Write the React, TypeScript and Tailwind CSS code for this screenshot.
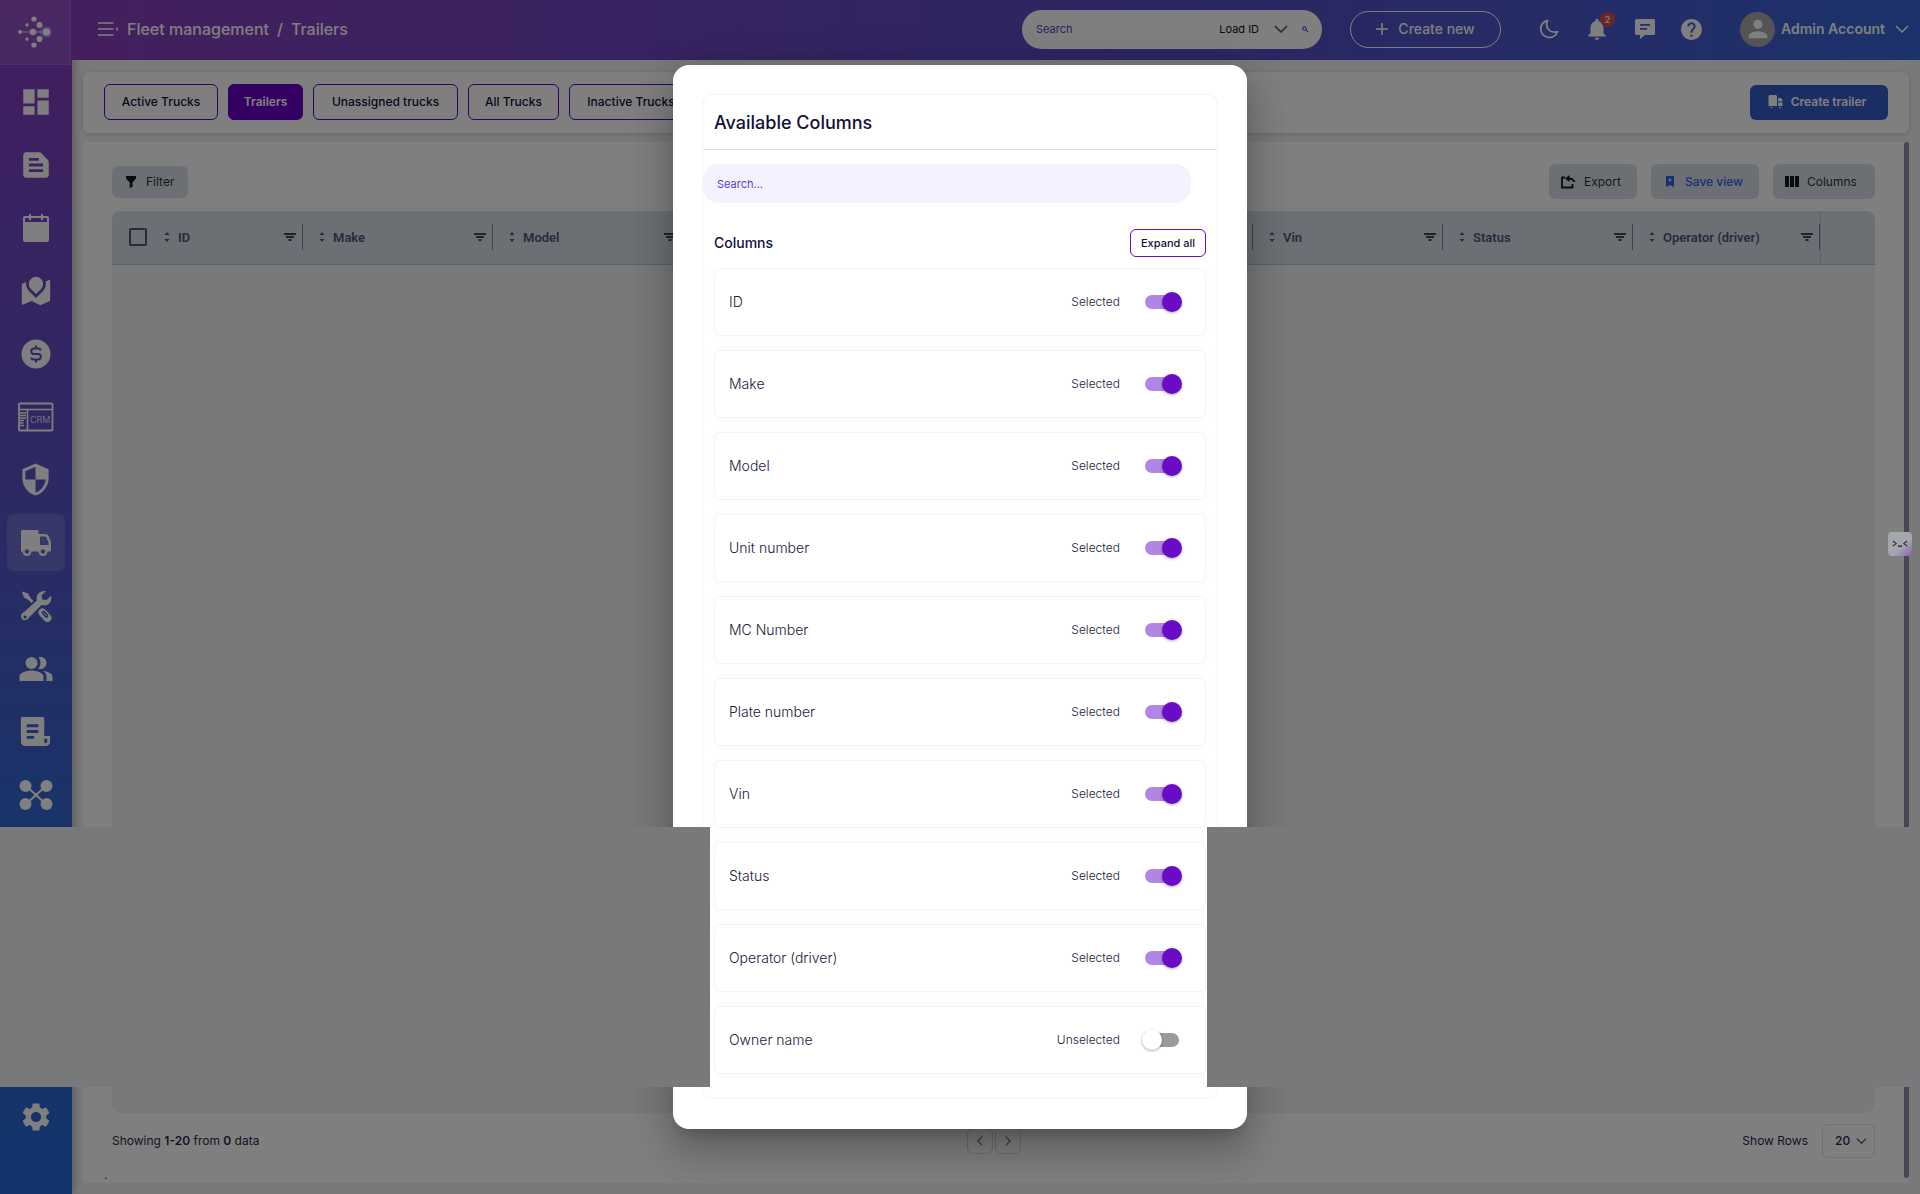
import React, { useState } from "react";
import {
  MdDashboard,
  MdTextSnippet,
  MdPeopleAlt,
  MdSettings,
  MdSecurity,
  MdPerson,
  MdHelp,
  MdNotifications,
} from "react-icons/md";
import { RiFileList3Fill, RiRoadMapFill } from "react-icons/ri";

type IconProps = { className?: string };

const LogoIcon = ({ className }: IconProps) => (
  <svg viewBox="0 0 36 32" className={className} fill="currentColor" aria-hidden="true">
    <circle cx="29" cy="16" r="6" opacity="0.25" />
    <path d="M3 16h26" stroke="currentColor" strokeWidth="1.2" opacity="0.7" />
    <circle cx="17" cy="3" r="2.6" />
    <circle cx="10" cy="9" r="1.7" />
    <circle cx="22.5" cy="9" r="3" />
    <circle cx="3" cy="16" r="1.9" />
    <circle cx="16" cy="16" r="3.2" />
    <circle cx="29.5" cy="16" r="3.8" />
    <circle cx="10" cy="23" r="1.7" />
    <circle cx="22.5" cy="23" r="3" />
    <circle cx="17" cy="29" r="2.6" />
  </svg>
);

const CalendarIcon = ({ className }: IconProps) => (
  <svg viewBox="0 0 28 30" className={className} fill="currentColor" aria-hidden="true">
    <path fillRule="evenodd" d="M7 1h2v2h10V1h2v2h4a2 2 0 0 1 2 2v22a2 2 0 0 1-2 2H3a2 2 0 0 1-2-2V5a2 2 0 0 1 2-2h4V1zM3 5v4h22V5h-4v2h-2V5H9v2H7V5H3z" />
  </svg>
);

const DollarIcon = ({ className }: IconProps) => (
  <svg viewBox="0 0 30 30" className={className} aria-hidden="true">
    <circle cx="15" cy="15" r="14.5" fill="currentColor" />
    <path d="M15 6.500v3M15 20.500v3M19.500 11.500a2 2 0 0 0-2-2h-4.500a2.700 2.700 0 0 0 0 5.500h4a2.700 2.700 0 0 1 0 5.500h-4.500a2 2 0 0 1-2-2" fill="none" stroke="#5d4cc0" strokeWidth="2" />
  </svg>
);

const CrmIcon = ({ className }: IconProps) => (
  <svg viewBox="0 0 36 30" className={className} fill="none" stroke="currentColor" aria-hidden="true">
    <rect x="1" y="1.500" width="33.500" height="27" rx="1" strokeWidth="1.800" />
    <path d="M1 7.500h33.500M9.500 7.500v21" strokeWidth="1.600" />
    <path d="M2 11h6M2 13.500h6M2 16h6M2 18.500h4M2 21h3.500M2 23.500h4" strokeWidth="1.400" />
    <text x="12" y="21" fontSize="9" fontFamily="Inter, sans-serif" fontWeight="300" fill="currentColor" stroke="none">CRM</text>
  </svg>
);

const TruckIcon = ({ className }: IconProps) => (
  <svg viewBox="0 0 32 27" className={className} aria-hidden="true">
    <path fill="currentColor" fillRule="evenodd" d="M2 1h15a1.500 1.500 0 0 1 1.500 1.500V5H25c2 0 3 1 4 3l2 5v8a1.500 1.500 0 0 1-1.500 1.500H1V2a1 1 0 0 1 1-1zm18 6.500v8.500h8.500v-3l-2-4c-.5-1-1-1.500-2-1.500H20z" />
    <circle cx="7" cy="22.500" r="4.500" fill="currentColor" />
    <circle cx="23" cy="22.500" r="4.500" fill="currentColor" />
    <circle cx="7" cy="22.500" r="2.200" fill="#686ab0" />
    <circle cx="23" cy="22.500" r="2.200" fill="#686ab0" />
  </svg>
);

const ToolsIcon = ({ className }: IconProps) => (
  <svg viewBox="0 0 32 32" className={className} aria-hidden="true">
    <path fill="currentColor" d="M2.500 1.500L8 3.500l2.500 4.500 3 3-2 2-3-3L4 7.500l-2-5z" />
    <path fill="currentColor" d="M26 1l-4.500 4.500.7 4 4.300.6L31 5.700c1 4-.5 7.500-3.500 9-2 1-4 1-6 .3L9 27.500c-1.800 4-8 3.600-8-1 0-2.500 1.500-3.700 3-4.500L17 10.500C15.500 4.500 19.500.5 26 1z" />
    <circle cx="5" cy="27" r="1.500" fill="#4455b8" />
    <path d="M22.500 22.500l5 5.500" stroke="currentColor" strokeWidth="8" strokeLinecap="round" />
    <path d="M23.500 22.500l3 3.500" stroke="#4455b8" strokeWidth="3.600" strokeLinecap="round" />
    <path d="M23.500 22.500l3 3.500" stroke="currentColor" strokeWidth="1" strokeLinecap="round" />
  </svg>
);

const NetworkIcon = ({ className }: IconProps) => (
  <svg viewBox="0 0 34 32" className={className} fill="currentColor" aria-hidden="true">
    <path d="M6 6l22 20M28 6L6 26" stroke="currentColor" strokeWidth="2" />
    <circle cx="6.500" cy="7" r="6" />
    <circle cx="27.500" cy="7" r="6" />
    <circle cx="6.500" cy="25" r="6" />
    <circle cx="27.500" cy="25" r="6" />
    <circle cx="17" cy="16" r="2" />
  </svg>
);

const MoonIcon = ({ className }: IconProps) => (
  <svg viewBox="0 0 20 20" className={className} fill="none" stroke="currentColor" strokeWidth="1.800" strokeLinejoin="round" aria-hidden="true">
    <path d="M8.500 1.500A8.600 8.600 0 1 0 18.500 12.500C11 15 5.500 9 8.500 1.500z" />
  </svg>
);

const ChatIcon = ({ className }: IconProps) => (
  <svg viewBox="0 0 20 20" className={className} fill="currentColor" aria-hidden="true">
    <path fillRule="evenodd" d="M1.500 0h17A1.500 1.500 0 0 1 20 1.500v13a1.500 1.500 0 0 1-1.500 1.500H10l-5 4v-4H1.500A1.500 1.500 0 0 1 0 14.500v-13A1.500 1.500 0 0 1 1.500 0zM5 5v1.700h10V5H5zm0 4v1.700h7V9H5z" />
  </svg>
);

const Chevron = ({ className }: IconProps) => (
  <svg viewBox="0 0 14 8" className={className} fill="none" stroke="currentColor" strokeWidth="1.600" aria-hidden="true">
    <path d="M1 1l6 6 6-6" />
  </svg>
);

const FunnelIcon = ({ className }: IconProps) => (
  <svg viewBox="0 0 10 12" className={className} fill="currentColor" aria-hidden="true">
    <path d="M0 0h10v2.500L6.500 6.500V11L3.700 12V6.500L0 2.500z" />
  </svg>
);

const FilterLines = () => (
  <svg viewBox="0 0 12 8" className="h-2 w-3" fill="none" stroke="#161616" aria-hidden="true">
    <path d="M0 1h12M2 4h8M4.500 7h3" strokeWidth="1.600" />
  </svg>
);

const SortIcon = () => (
  <svg viewBox="0 0 6 10" className="h-2.5 w-1.5 shrink-0" fill="currentColor" aria-hidden="true">
    <path d="M3 0l2.500 3h-5zM3 10L.5 7h5z" />
  </svg>
);

const ExportIcon = () => (
  <svg viewBox="0 0 15 14" className="h-3.5 w-[15px]" fill="none" stroke="#161616" strokeWidth="1.800" aria-hidden="true">
    <path d="M4 2.500H1V12.500h10.500V9" />
    <path d="M13.500 7c-1-2.500-3-3.500-6-3.500" />
    <path d="M8.500 0v7L4 3.500z" fill="#161616" stroke="none" />
  </svg>
);

const BookmarkIcon = () => (
  <svg viewBox="0 0 8 11" className="h-[11px] w-2" fill="#2f5fe8" aria-hidden="true">
    <path d="M0 0h8v11L4 9l-4 2z" />
    <circle cx="4" cy="4" r="1.400" fill="#d8e0eb" />
  </svg>
);

const ColumnsIcon = () => (
  <svg viewBox="0 0 14 11" className="h-[11px] w-3.5" fill="#161616" aria-hidden="true">
    <path d="M0 0h4v11H0zM5 0h4v11H5zM10 0h4v11h-4z" />
  </svg>
);

const TrailerIcon = () => (
  <svg viewBox="0 0 15 14" className="h-3.5 w-[15px]" fill="currentColor" aria-hidden="true">
    <path d="M1.500 0H8l1 1v10H.5V1zM10 3h3l1.500 2v1.500H10zM10 7.500h4.500V11H10z" />
    <path d="M2 12h2.500L3.500 13.500zM10.500 12h3L12 13.500z" />
  </svg>
);

const navItems = [
  { name: "Dashboard", icon: <MdDashboard className="size-[34px]" /> },
  { name: "Loads", icon: <MdTextSnippet className="size-[34px]" /> },
  { name: "Calendar", icon: <CalendarIcon className="h-[30px] w-7" /> },
  { name: "Map", icon: <RiRoadMapFill className="size-[34px]" /> },
  { name: "Accounting", icon: <DollarIcon className="size-[30px]" /> },
  { name: "Customers", icon: <CrmIcon className="h-[30px] w-9" /> },
  { name: "Safety", icon: <MdSecurity className="size-[35px]" /> },
  { name: "Fleet", icon: <TruckIcon className="h-[27px] w-8" />, active: true },
  { name: "Maintenance", icon: <ToolsIcon className="size-8" /> },
  { name: "Users", icon: <MdPeopleAlt className="size-9" /> },
  { name: "Reports", icon: <RiFileList3Fill className="size-[35px]" /> },
  { name: "Integrations", icon: <NetworkIcon className="h-8 w-[34px]" /> },
];

const tabs = [
  { label: "Active Trucks", width: "w-[114px]" },
  { label: "Trailers", width: "w-[75px]" },
  { label: "Unassigned trucks", width: "w-[145px]" },
  { label: "All Trucks", width: "w-[91px]" },
  { label: "Inactive Trucks", width: "w-[124px]" },
];

const headers = ["ID", "Make", "Model", "Unit number", "MC Number", "Plate number", "Vin", "Status", "Operator (driver)"];

const columnItems = [...headers, "Owner name"];

function Sidebar() {
  return (
    <aside className="flex w-[72px] shrink-0 flex-col bg-[linear-gradient(to_bottom,#863abe_0%,#5456c8_46%,#3466d2_67%,#2468d4_100%)] pr-px text-white shadow-[2px_0_8px_rgba(0,0,0,0.25)]">
      <a href="#home" aria-label="Home" className="flex h-[65px] shrink-0 items-center justify-center border-r border-b border-white/10 bg-white/10">
        <LogoIcon className="h-8 w-9" />
      </a>
      <nav className="flex flex-1 flex-col items-center gap-1.5 pt-2">
        {navItems.map((item) => (
          <a
            key={item.name}
            href="#nav"
            aria-label={item.name}
            className={`flex h-[57px] w-[58px] items-center justify-center rounded-md ${item.active ? "bg-white/15" : ""}`}
          >
            {item.icon}
          </a>
        ))}
      </nav>
      <a href="#settings" aria-label="Settings" className="mb-[49px] flex h-[57px] items-center justify-center">
        <MdSettings className="size-[34px]" />
      </a>
    </aside>
  );
}

function Header() {
  return (
    <header className="flex h-[60px] shrink-0 items-center bg-linear-to-r from-[#883ebc] via-[#564cc4] via-60% to-[#3864d6] pr-[11px] pb-0.5 pl-[26px] text-white">
      <button aria-label="Toggle menu">
        <svg viewBox="0 0 20 14" className="h-3.5 w-5" stroke="currentColor" strokeWidth="1.600" aria-hidden="true">
          <path d="M0 1h15.500M0 7h15.500M0 13h15.500" />
          <path d="M19 5.500v3" />
        </svg>
      </button>
      <h1 className="ml-[9px] flex gap-2 text-base font-medium">
        <span>Fleet management</span>
        <span>/</span>
        <span>Trailers</span>
      </h1>
      <div className="ml-auto flex h-[39px] w-[300px] items-center rounded-[20px] bg-white px-3.5 text-[11px]">
        <input aria-label="Search" placeholder="Search" className="min-w-0 flex-1 outline-none placeholder:text-[#5a3ed0]" />
        <button className="flex items-center gap-[15px] text-[#12103a]">
          Load ID
          <Chevron className="h-2 w-3.5 text-[#555]" />
        </button>
        <button aria-label="Run search" className="ml-3.5 text-[#6a00c8]">
          <svg viewBox="0 0 6 6" className="size-1.5" fill="none" stroke="currentColor" aria-hidden="true">
            <circle cx="2.500" cy="2.500" r="1.800" />
            <path d="M4 4l2 2" />
          </svg>
        </button>
      </div>
      <button className="ml-7 flex h-[37px] w-[151px] items-center justify-center gap-2.5 rounded-full border border-white text-sm font-medium">
        <svg viewBox="0 0 12 12" className="size-3" stroke="currentColor" strokeWidth="1.600" aria-hidden="true">
          <path d="M6 0v12M0 6h12" />
        </svg>
        Create new
      </button>
      <button aria-label="Dark mode" className="ml-[38px]">
        <MoonIcon className="size-5" />
      </button>
      <button aria-label="Notifications" className="relative ml-[25px]">
        <MdNotifications className="size-[26px]" />
        <span className="absolute -top-1 left-4 flex size-[15px] items-center justify-center rounded-full bg-[#d8504c] text-[9px] font-medium">
          2
        </span>
      </button>
      <button aria-label="Messages" className="ml-[25px]">
        <ChatIcon className="size-5" />
      </button>
      <button aria-label="Help" className="ml-6">
        <MdHelp className="size-[25px]" />
      </button>
      <button className="ml-9 flex items-center text-sm font-semibold">
        <span className="flex size-[35px] items-center justify-center rounded-full bg-[#a8a8a8]">
          <MdPerson className="size-7" />
        </span>
        <span className="ml-1.5">Admin Account</span>
        <Chevron className="ml-2.5 h-2 w-3.5" />
      </button>
    </header>
  );
}

function TableCard() {
  return (
    <section className="flex min-h-0 flex-1 rounded bg-white">
      <div className="flex min-w-0 flex-1 flex-col px-[29px]">
        <div className="flex items-center gap-3.5 pt-[22px] text-xs text-[#333]">
          <button className="mr-auto flex h-8 w-[76px] items-center gap-2.5 rounded-md bg-[#d8dfe8] pl-3.5">
            <FunnelIcon className="h-3 w-2.5 text-[#161616]" />
            Filter
          </button>
          <button className="flex h-[35px] w-[88px] items-center gap-2 rounded-md bg-[#d8dfe8] pl-3">
            <ExportIcon />
            Export
          </button>
          <button className="flex h-[35px] w-[108px] items-center gap-[11px] rounded-md bg-[#d8dfe8] pl-[15px] font-medium text-[#2f5fe8]">
            <BookmarkIcon />
            Save view
          </button>
          <button className="flex h-[35px] w-[102px] items-center gap-2 rounded-md bg-[#d8dfe8] pl-3">
            <ColumnsIcon />
            Columns
          </button>
        </div>
        <div className="mt-3 flex-1 overflow-hidden rounded-lg bg-[#f0f2f6]">
          <table className="w-full table-fixed border-collapse font-['Roboto','Liberation_Sans',sans-serif] text-[13px] font-semibold text-[#4a5878]">
            <thead>
              <tr className="h-[53px] border-b border-[#b8c2d4] bg-[#d8dfe8] text-left">
                {headers.map((header, index) => (
                  <th key={header} className={`p-0 font-semibold ${index === 0 ? "w-[191px]" : index === headers.length - 1 ? "w-[187px]" : "w-[190px]"}`}>
                    <div className="flex h-[26px] items-center border-r border-[#7484a0] pr-1.5">
                      {index === 0 && (
                        <input type="checkbox" aria-label="Select all" className="ml-[17px] size-[18px] appearance-none rounded-xs border-2 border-[#4a5878]" />
                      )}
                      <button className={`flex items-center gap-2 ${index === 0 ? "ml-[17px]" : "ml-4"}`}>
                        <SortIcon />
                        {header}
                      </button>
                      <button aria-label={`Filter ${header}`} className="ml-auto">
                        <FilterLines />
                      </button>
                    </div>
                  </th>
                ))}
                <th className="border-l border-[#b8c2d4] p-0" aria-label="Actions" />
              </tr>
            </thead>
          </table>
        </div>
        <footer className="mt-[11px] text-xs text-[#2a2848]">
          <div className="flex items-center">
            <p className="flex-1">
              Showing <b className="font-semibold">1-20</b> from <b className="font-semibold">0</b> data
            </p>
            <div className="flex gap-0.5 text-[#666]">
              <button aria-label="Previous page" className="flex size-[26px] items-center justify-center rounded-md border border-[#d8d8d8]">
                <Chevron className="h-1.5 w-2.5 rotate-90" />
              </button>
              <button aria-label="Next page" className="flex size-[26px] items-center justify-center rounded-md border border-[#d8d8d8]">
                <Chevron className="h-1.5 w-2.5 -rotate-90" />
              </button>
            </div>
            <div className="flex flex-1 items-center justify-end gap-3.5">
              <label htmlFor="rows">Show Rows</label>
              <div className="relative">
                <select id="rows" className="h-[34px] w-[53px] appearance-none rounded-md border border-[#e0e0e0] pl-3 font-medium">
                  <option>20</option>
                </select>
                <Chevron className="pointer-events-none absolute top-3.5 right-2 h-1.5 w-[11px] text-[#555]" />
              </div>
            </div>
          </div>
          <p className="-ml-2 flex h-[25px] items-end">.</p>
        </footer>
      </div>
      <div className="mb-[5px] w-[5px] rounded-full bg-[#8c8cac]" />
    </section>
  );
}

function ColumnRow({ name }: { name: string }) {
  const [selected, setSelected] = useState(name !== "Owner name");
  return (
    <li className="shrink-0 rounded-md border border-[#f2f4f9] shadow-[0_0_8px_rgba(90,90,130,0.03)]">
      <label className="flex h-[66px] items-center pr-[26px] pb-px pl-3.5 text-sm font-light text-[#22203e]">
        <span className="flex-1">{name}</span>
        <span className="mr-[25px] text-xs">{selected ? "Selected" : "Unselected"}</span>
        <input
          type="checkbox"
          checked={selected}
          onChange={() => setSelected(!selected)}
          className="relative h-3.5 w-[34px] appearance-none rounded-full bg-[#9a9a9a] before:absolute before:-top-[3px] before:-left-[3px] before:size-5 before:rounded-full before:bg-white before:shadow-[0_1px_3px_rgba(0,0,0,0.35)] checked:bg-[#b185e3] checked:before:left-[17px] checked:before:bg-[#6a0bc8]"
        />
      </label>
    </li>
  );
}

function ColumnsDialog() {
  return (
    <div role="dialog" aria-label="Available Columns" className="flex h-[calc(100%-130px)] w-full max-w-[574px] rounded-2xl bg-white px-[29px] pt-[29px] pb-[30px] shadow-[0_11px_15px_-7px_rgba(0,0,0,0.2),0_24px_38px_3px_rgba(0,0,0,0.14),0_9px_46px_8px_rgba(0,0,0,0.12)]">
      <div className="flex min-h-0 w-full flex-col rounded-[10px] border border-[#f2f4f9] pb-[10px]">
        <h2 className="flex h-[55px] shrink-0 items-center border-b border-[#dde0e4] pt-0.5 pl-[11px] text-lg font-medium text-[#12103a]">
          Available Columns
        </h2>
        <input
          aria-label="Search columns"
          placeholder="Search..."
          className="mt-3.5 mr-[26px] h-[39px] shrink-0 rounded-2xl bg-[#f4f2ff] px-3.5 text-[11px] outline-none placeholder:text-[#5a3ed0]"
        />
        <div className="mt-[26px] flex h-7 shrink-0 items-center justify-between px-[11px] text-[#12103a]">
          <h3 className="text-sm font-medium">Columns</h3>
          <button className="h-7 w-[76px] rounded-md border border-[#6a0bc8] text-[11px] font-medium">Expand all</button>
        </div>
        <ul className="mt-[11px] flex min-h-0 flex-1 flex-col gap-3.5 overflow-hidden px-[11px]">
          {columnItems.map((name) => (
            <ColumnRow key={name} name={name} />
          ))}
          <li className="h-[68px] shrink-0 rounded-md border border-[#f0f2f6]" />
        </ul>
      </div>
    </div>
  );
}

export default function App() {
  return (
    <div className="relative flex h-screen overflow-hidden bg-[#f2f2f2] font-['Inter','Liberation_Sans',sans-serif]">
      <Sidebar />
      <div className="flex min-w-0 flex-1 flex-col">
        <Header />
        <main className="flex min-h-0 flex-1 flex-col gap-[9px] px-[11px] pt-3 pb-[11px]">
          <section className="flex h-[61px] shrink-0 items-center gap-2.5 rounded-md bg-white px-[21px] pb-px shadow-[0_1px_4px_rgba(0,0,0,0.15)]">
            {tabs.map((tab) => (
              <button
                key={tab.label}
                className={`h-9 rounded-md border border-[#6a00c8] text-xs ${tab.width} ${
                  tab.label === "Trailers" ? "bg-[#6a00c8] font-semibold text-white" : "font-medium text-[#12103a]"
                }`}
              >
                {tab.label}
              </button>
            ))}
            <button className="ml-auto flex h-[35px] w-[138px] items-center justify-center gap-2 rounded-md bg-[#345cc8] pr-1 text-xs font-semibold text-white">
              <TrailerIcon />
              Create trailer
            </button>
          </section>
          <TableCard />
        </main>
      </div>

      <div className="absolute inset-0 flex items-center justify-center bg-black/50">
        <ColumnsDialog />
      </div>

      <div className="pointer-events-none absolute inset-x-0 top-[827px] flex h-[260px]">
        <div className="w-[37%] bg-[#78797b]" />
        <div className="w-[497px]" />
        <div className="flex-1 bg-[#78797b]" />
      </div>

      <button aria-label="Open assistant" className="absolute top-[532px] right-2 flex size-6 items-center justify-center rounded bg-linear-to-br from-[#a4a7ab] from-60% to-[#8a5cb0] text-[#333848]">
        <svg viewBox="0 0 16 8" className="h-2 w-4" fill="none" stroke="currentColor" strokeWidth="1.400" aria-hidden="true">
          <path d="M1 1l3 2.500L1 6M15 1l-3 2.500L15 6M6 5.500q2 2 4 0" />
        </svg>
      </button>
    </div>
  );
}
